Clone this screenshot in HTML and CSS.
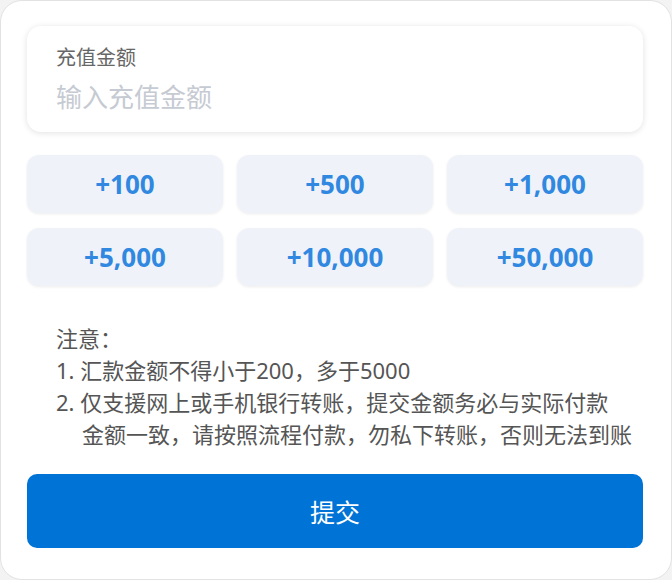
FILE: index.html
```html
<!DOCTYPE html>
<html lang="zh-CN">
<head>
  <meta charset="UTF-8" />
  <meta name="viewport" content="width=device-width, initial-scale=1.0" />
  <title>充值</title>
  <link rel="stylesheet" href="styles.css">
</head>
<body>
  <div class="panel">
    <div class="amount-box">
      <div class="amount-label">充值金额</div>
      <input class="amount-input" placeholder="输入充值金额" />
    </div>

    <div class="quick-grid">
      <button class="quick">+100</button>
      <button class="quick">+500</button>
      <button class="quick">+1,000</button>
      <button class="quick">+5,000</button>
      <button class="quick">+10,000</button>
      <button class="quick">+50,000</button>
    </div>

    <div class="notes">
      <div>注意：</div>
      <div>1. 汇款金额不得小于200，多于5000</div>
      <div>2. 仅支援网上或手机银行转账，提交金额务必与实际付款</div>
      <div class="indent">金额一致，请按照流程付款，勿私下转账，否则无法到账</div>
    </div>

    <button class="submit">提交</button>
  </div>
</body>
</html>
```

FILE: styles.css
```css
body {
  margin: 0;
  padding: 0;
  background: #f3f3f3;
  font-family: "Noto Sans", "Noto Sans CJK SC", sans-serif;
}

.panel {
  width: 672px;
  height: 580px;
  box-sizing: border-box;
  background: #fff;
  border: 1px solid #e2e2e2;
  border-radius: 22px;
  padding: 25px 28px 0 26px;
}

.amount-box {
  height: 106px;
  box-sizing: border-box;
  border-radius: 14px;
  background: #fff;
  box-shadow: 0 1px 6px rgba(0, 0, 0, 0.12);
  padding: 18px 28px 0 29px;
}

.amount-label {
  font-size: 20px;
  line-height: 28px;
  color: #666;
}

.amount-input {
  display: block;
  width: 100%;
  border: none;
  outline: none;
  padding: 0;
  margin-top: 6px;
  font-family: inherit;
  font-size: 26px;
  line-height: 38px;
  height: 38px;
  background: transparent;
}

.amount-input::placeholder {
  color: #c6cad2;
}

.quick-grid {
  display: grid;
  grid-template-columns: repeat(3, 1fr);
  column-gap: 14px;
  row-gap: 15px;
  margin-top: 23px;
}

.quick {
  height: 58px;
  border: none;
  border-radius: 12px;
  background: #eff3f9;
  box-shadow: 0 1px 3px rgba(0, 0, 0, 0.08);
  color: #3088e0;
  font-family: inherit;
  font-size: 26px;
  font-weight: 700;
  cursor: pointer;
}

.notes {
  margin-top: 36px;
  padding-left: 29px;
  font-size: 22px;
  line-height: 32px;
  color: #555;
}

.notes .indent {
  padding-left: 26px;
}

.submit {
  display: block;
  width: 100%;
  height: 74px;
  margin-top: 24px;
  border: none;
  border-radius: 10px;
  background: #0073d6;
  color: #fff;
  font-family: inherit;
  font-size: 25px;
  cursor: pointer;
}
```
